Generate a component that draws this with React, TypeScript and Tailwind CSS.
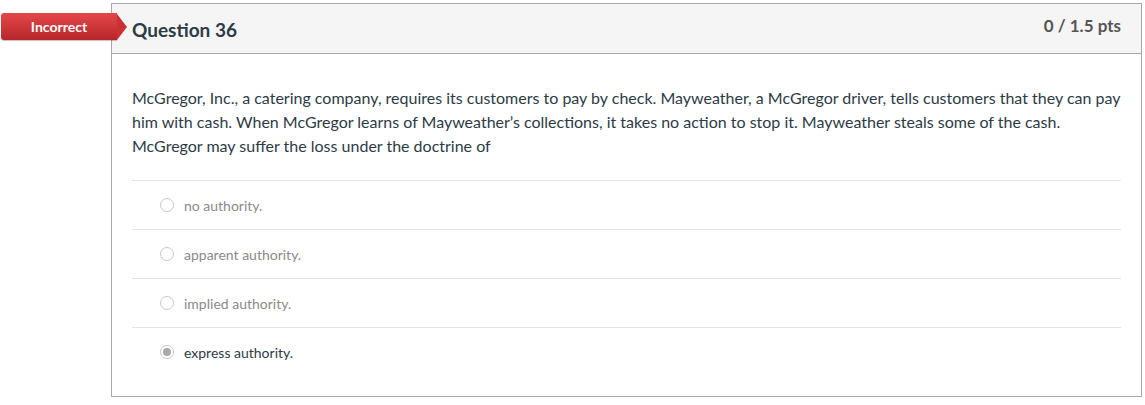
import React from "react";

const answers = [
  { text: "no authority.", selected: false },
  { text: "apparent authority.", selected: false },
  { text: "implied authority.", selected: false },
  { text: "express authority.", selected: true },
];

function Radio({ selected }: { selected: boolean }) {
  return (
    <span className="flex h-[14px] w-[14px] items-center justify-center rounded-full border border-[#c8c8c8] bg-white">
      {selected && <span className="h-[8px] w-[8px] rounded-full bg-[#a9a9a9]" />}
    </span>
  );
}

export default function App() {
  return (
    <div
      className="relative bg-white pt-[3px] pl-[111px] pr-[3px] pb-[8px]"
      style={{ fontFamily: "Lato, 'Open Sans', sans-serif" }}
    >
      <div className="absolute left-[1px] top-[13px] flex h-[27px] items-center">
        <div className="flex h-[27px] w-[116px] items-center justify-center rounded-l-[3px] bg-gradient-to-b from-[#e4474b] to-[#b8262a] text-[14px] font-bold text-white shadow-[0_1px_1px_rgba(0,0,0,0.25)]">
          Incorrect
        </div>
        <div className="h-0 w-0 border-y-[13.5px] border-l-[10px] border-y-transparent border-l-[#cc3034]" />
      </div>
      <div className="border border-[#a8a8a8] bg-white">
        <div className="flex h-[50px] items-start justify-between border-b border-[#a8a8a8] bg-[#f5f5f5] px-[20px]">
          <h2 className="pt-[15px] text-[19px] font-bold leading-[22px] text-[#2d3b45]">Question 36</h2>
          <div className="pt-[12px] text-[17px] font-bold leading-[20px] text-[#555]">0 / 1.5 pts</div>
        </div>
        <div className="px-[20px] pt-[32px] pb-[20px]">
          <p className="text-[16px] leading-[24px] text-[#2d3b45]">
            McGregor, Inc., a catering company, requires its customers to pay by check. Mayweather, a McGregor driver, tells customers that they can pay him with cash. When McGregor learns of Mayweather’s collections, it takes no action to stop it. Mayweather steals some of the cash. McGregor may suffer the loss under the doctrine of
          </p>
          <div className="mt-[22px]">
            {answers.map((a) => (
              <div key={a.text} className="flex h-[49px] items-center border-t border-[#e4e4e4] pl-[28px]">
                <Radio selected={a.selected} />
                <span
                  className={`ml-[10px] text-[14px] ${a.selected ? "text-[#2d3b45]" : "text-[#8a8a8a]"}`}
                >
                  {a.text}
                </span>
              </div>
            ))}
          </div>
        </div>
      </div>
    </div>
  );
}
